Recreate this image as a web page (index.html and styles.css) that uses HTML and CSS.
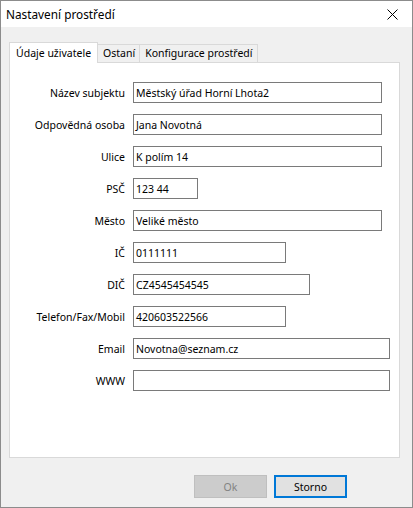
FILE: index.html
```html
<!DOCTYPE html>
<html lang="cs">
<head>
<meta charset="utf-8">
<title>Nastavení prostředí</title>
<link rel="stylesheet" href="styles.css">
</head>
<body>
<div class="window">
  <div class="titlebar">
    <span class="title">Nastavení prostředí</span>
    <span class="close" aria-label="Zavřít">
      <svg width="11" height="11" viewBox="0 0 11 11"><path d="M0.5 0.5 L10.5 10.5 M10.5 0.5 L0.5 10.5" stroke="#000" stroke-width="1" fill="none"/></svg>
    </span>
  </div>
  <div class="client">
    <div class="tabs">
      <div class="tab active">Údaje uživatele</div>
      <div class="tab">Ostaní</div>
      <div class="tab">Konfigurace prostředí</div>
    </div>
    <div class="panel">
      <div class="form">
        <label class="lbl">Název subjektu</label>
        <div class="field w-lg">Městský úřad Horní Lhota2</div>
        <label class="lbl">Odpovědná osoba</label>
        <div class="field w-lg">Jana Novotná</div>
        <label class="lbl">Ulice</label>
        <div class="field w-lg">K polím 14</div>
        <label class="lbl">PSČ</label>
        <div class="field w-xs">123 44</div>
        <label class="lbl">Město</label>
        <div class="field w-lg">Veliké město</div>
        <label class="lbl">IČ</label>
        <div class="field w-md">0111111</div>
        <label class="lbl">DIČ</label>
        <div class="field w-mdl">CZ4545454545</div>
        <label class="lbl">Telefon/Fax/Mobil</label>
        <div class="field w-md">420603522566</div>
        <label class="lbl">Email</label>
        <div class="field w-xl">Novotna@seznam.cz</div>
        <label class="lbl">WWW</label>
        <div class="field w-xl"></div>
      </div>
    </div>
    <div class="footer">
      <button class="btn disabled" disabled>Ok</button>
      <button class="btn default">Storno</button>
    </div>
  </div>
</div>
</body>
</html>
```
FILE: styles.css
```css
html, body {
  margin: 0;
  padding: 0;
  background: #f0f0f0;
}

.window {
  box-sizing: border-box;
  width: 413px;
  height: 508px;
  border: 1px solid #8c8c8c;
  background: #f0f0f0;
  font-family: "Noto Sans", "Open Sans", sans-serif;
  font-size: 10.5px;
  color: #000;
  display: flex;
  flex-direction: column;
}

.titlebar {
  height: 26px;
  background: #fff;
  display: flex;
  align-items: center;
  justify-content: space-between;
  padding: 0 14px 0 5px;
}

.title {
  font-size: 11.8px;
  padding-bottom: 1px;
}

.close {
  display: flex;
  width: 11px;
  height: 11px;
}

.client {
  flex: 1;
  display: flex;
  flex-direction: column;
  padding: 15px 12px 0 8px;
}

.tabs {
  display: flex;
  align-items: flex-end;
  height: 20px;
  position: relative;
  z-index: 1;
}

.tab {
  box-sizing: border-box;
  height: 18px;
  padding: 0 4px 0 5px;
  border: 1px solid #d9d9d9;
  border-bottom: none;
  border-left: none;
  background: #f0f0f0;
  display: flex;
  align-items: center;
  line-height: 1;
}

.tab.active {
  height: 21px;
  margin-bottom: -1px;
  padding: 0 6px 0 6px;
  border-left: 1px solid #d9d9d9;
  background: #fff;
}

.panel {
  box-sizing: border-box;
  height: 396px;
  background: #fff;
  border: 1px solid #d9d9d9;
}

.form {
  display: grid;
  grid-template-columns: 115px auto;
  column-gap: 8px;
  row-gap: 11px;
  padding-top: 19px;
  justify-items: start;
  align-items: center;
}

.lbl {
  justify-self: end;
  white-space: nowrap;
}

.field {
  box-sizing: border-box;
  height: 21px;
  border: 1px solid #7a7a7a;
  padding: 0 2px;
  display: flex;
  align-items: center;
  white-space: nowrap;
  background: #fff;
}

.w-xs { width: 65px; }
.w-md { width: 153px; }
.w-mdl { width: 177px; }
.w-lg { width: 249px; }
.w-xl { width: 257px; }

.footer {
  display: flex;
  justify-content: flex-end;
  gap: 7px;
  padding: 17px 53px 0 0;
}

.btn {
  box-sizing: border-box;
  width: 73px;
  height: 23px;
  font-family: inherit;
  font-size: 10.5px;
  padding: 0;
  border: 1px solid #adadad;
  background: #e1e1e1;
  color: #000;
}

.btn.disabled {
  background: #cccccc;
  border-color: #bfbfbf;
  color: #838383;
}

.btn.default {
  border: 2px solid #0078d7;
}
```
